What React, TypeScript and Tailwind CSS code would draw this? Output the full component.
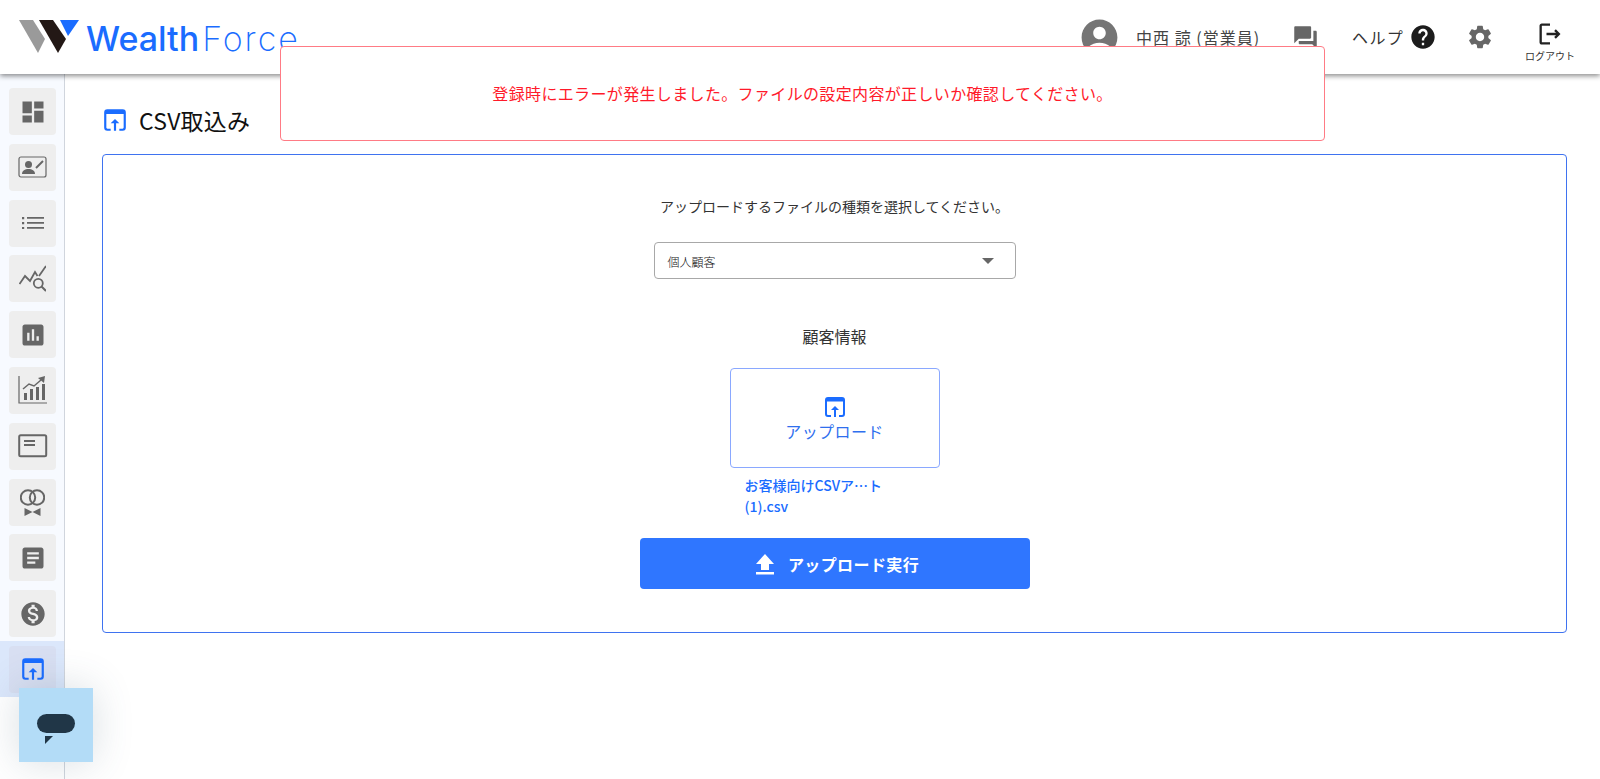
import {
  MdAccountCircle,
  MdArticle,
  MdAssessment,
  MdDashboard,
  MdForum,
  MdHelp,
  MdMonetizationOn,
  MdOutlineLogout,
  MdSettings,
} from "react-icons/md";

const UploadWindowIcon = ({ size = 24 }: { size?: number }) => (
  <svg width={size} height={size} viewBox="0 0 24 24" fill="none">
    <path d="M3 6.5V5a2 2 0 0 1 2-2h14a2 2 0 0 1 2 2v1.5z" fill="#1a6cff" />
    <path
      d="M8 21H5a2 2 0 0 1-2-2V5a2 2 0 0 1 2-2h14a2 2 0 0 1 2 2v14a2 2 0 0 1-2 2h-3"
      stroke="#1a6cff"
      strokeWidth="2"
    />
    <path d="M12 11l-4 4h3v7h2v-7h3z" fill="#1a6cff" />
  </svg>
);

const PersonCardIcon = () => (
  <svg width="30" height="24" viewBox="0 0 30 24" fill="none">
    <rect x="1" y="2" width="27" height="20" rx="2" stroke="#666" strokeWidth="1.2" />
    <circle cx="10.5" cy="9.5" r="3.5" fill="#666" />
    <path d="M4 19c0-3.5 3-5 6.500-5s6.500 1.500 6.500 5z" fill="#666" />
    <path d="M18 13l7-7" stroke="#666" strokeWidth="2" />
  </svg>
);

const ListIcon = () => (
  <svg width="22" height="12" viewBox="0 0 22 12" fill="#666">
    <path d="M0 0h2.200v2.200H0zM0 5h2.200v2.200H0zM0 10h2.200v2H0z" />
    <path d="M5 0h17v1.800H5zM5 5h17v1.800H5zM5 10h17v1.800H5z" />
  </svg>
);

const ChartSearchIcon = () => (
  <svg width="27" height="27" viewBox="0 0 27 27" fill="none" stroke="#666" strokeWidth="1.8">
    <path d="M0.500 19l5.500-8 5 5 5-9 2.500 4" />
    <path d="M20 11l7-10" />
    <circle cx="19.300" cy="18.300" r="4.500" />
    <path d="M22.500 21.500l4.500 4.500" strokeWidth="2" />
  </svg>
);

const GrowthChartIcon = () => (
  <svg width="30" height="30" viewBox="0 0 30 30" fill="none">
    <path d="M1 1v27h28" stroke="#666" strokeWidth="1.2" />
    <path d="M6 25v-7h3v7zM12 25V14h3v11zM18 25V12h3v13zM24 25V9h3v16z" fill="#666" />
    <path d="M5 14l6-5 5 2 7-6" stroke="#666" strokeWidth="1.500" />
    <path d="M20 3l7-2-1 7z" fill="#666" />
  </svg>
);

const CardIcon = () => (
  <svg width="30" height="24" viewBox="0 0 30 24" fill="none">
    <rect x="1.200" y="1.200" width="27" height="21" rx="1.500" stroke="#666" strokeWidth="2" />
    <path d="M6 7h11M6 11h11" stroke="#666" strokeWidth="2" />
  </svg>
);

const RingsIcon = () => (
  <svg width="25" height="27" viewBox="0 0 25 27" fill="none">
    <circle cx="8" cy="8.500" r="7.200" stroke="#666" strokeWidth="2" />
    <circle cx="17" cy="8.500" r="7.200" stroke="#666" strokeWidth="2" />
    <path d="M4.500 19l8 4-8 4zM20.500 19l-8 4 8 4z" fill="#666" />
  </svg>
);

const LogoMark = () => (
  <svg width="60" height="33" viewBox="0 0 60 33" className="shrink-0">
    <polygon points="0,0 14,0 26,19 19,33" fill="#9a9a9a" />
    <polygon points="20,0 34,0 47,19 39,33" fill="#231815" />
    <polygon points="41,0 60,0 49,16" fill="#1a6cff" />
  </svg>
);

const sideItems = [
  <MdDashboard size={28} color="#666" />,
  <PersonCardIcon />,
  <ListIcon />,
  <ChartSearchIcon />,
  <MdAssessment size={28} color="#666" />,
  <GrowthChartIcon />,
  <CardIcon />,
  <RingsIcon />,
  <MdArticle size={28} color="#666" />,
  <MdMonetizationOn size={28} color="#666" />,
];

export default function App() {
  return (
    <div
      className="relative flex h-[779px] w-[1600px] flex-col overflow-hidden bg-white text-[#222]"
      style={{ fontFamily: '"Noto Sans CJK JP", "Noto Sans", sans-serif' }}
    >
      <header className="relative z-10 flex h-[74px] shrink-0 items-center bg-white pl-[19px] shadow-[0_2px_5px_rgba(0,0,0,0.45)]">
        <div className="-mt-[1px] flex items-center">
          <LogoMark />
          <div
            className="ml-[7px] mt-[4px] whitespace-nowrap text-[34px] leading-none text-[#1a6cff]"
            style={{ fontFamily: "Inter, sans-serif" }}
          >
            <span className="font-medium">Wealth</span>
            <span className="ml-[3px] font-extralight tracking-[2px]">Force</span>
          </div>
        </div>

        <div className="ml-auto flex items-center">
          <MdAccountCircle size={43} color="#757575" />
          <span className="ml-[15px] text-base tracking-[1px] text-[#444]">中西 諒 (営業員)</span>
          <MdForum size={27} color="#666" className="ml-[32px]" />
          <span className="ml-[33px] text-base tracking-[1.3px] text-[#333]">ヘルプ</span>
          <MdHelp size={28} color="#1c1c1c" className="ml-[5px]" />
          <MdSettings size={28} color="#666" className="ml-[29px]" />
          <div className="ml-[33px] mr-[27px] flex w-[46px] flex-col items-center">
            <MdOutlineLogout size={28} color="#222" className="mt-[6px]" />
            <span className="mt-[3px] whitespace-nowrap text-[10px] leading-none text-[#333]">ログアウト</span>
          </div>
        </div>
      </header>

      <div className="flex min-h-0 flex-1">
        <aside className="flex w-[65px] shrink-0 flex-col border-r border-[#d0d5dd] bg-[linear-gradient(#f7faff,#f7faff_620px,#ffffff_620px)] pt-[14px]">
          {sideItems.map((icon, i) => (
            <div key={i} className="mb-[8.800px] ml-[9px] flex h-[47px] w-[47px] items-center justify-center rounded bg-[#eeeeee]">
              {icon}
            </div>
          ))}
          <div className="-mt-[4.800px] flex h-[56px] items-center bg-[#dbe7fb] pl-[9px]">
            <div className="flex h-[47px] w-[47px] items-center justify-center rounded bg-[#d8dff2]">
              <UploadWindowIcon size={26} />
            </div>
          </div>
        </aside>

        <main className="min-w-0 flex-1 pl-[37px] pr-[33px] pt-[33px]">
          <div className="flex h-[26px] items-center">
            <UploadWindowIcon size={26} />
            <h1 className="ml-[11px] text-[23px] font-normal leading-none tracking-[0.2px] text-[#111]">CSV取込み</h1>
          </div>

          <section className="mt-[21px] flex h-[479px] flex-col items-center rounded border border-[#3f73f0] pt-[41px]">
            <p className="text-sm leading-5 text-[#333]">アップロードするファイルの種類を選択してください。</p>

            <div className="mt-[26px] flex h-[37px] w-[362px] items-center justify-between rounded border border-[#a8a8a8] pl-[13px] pr-[21px]">
              <span className="mt-[2px] text-xs font-light text-[#111]">個人顧客</span>
              <span className="h-0 w-0 border-x-[6px] border-t-[6px] border-x-transparent border-t-[#666]" />
            </div>

            <p className="mt-[45px] text-base leading-6 text-[#333]">顧客情報</p>

            <div className="mt-[20px] flex h-[100px] w-[210px] flex-col items-center justify-center rounded border border-[#8aa8ff] pt-[2px]">
              <UploadWindowIcon size={24} />
              <span className="text-base leading-6 tracking-[0.4px] text-[#2f6fee]">アップロード</span>
            </div>

            <div className="mt-[7px] h-[42px] w-[210px] pl-[15px] text-sm font-medium leading-[21px] text-[#1a6cff]">
              <div>お客様向けCSVア⋯ト</div>
              <div>(1).csv</div>
            </div>

            <button className="mt-[21px] flex h-[51px] w-[390px] items-center justify-center rounded bg-[#2f76ff] pl-[5px] text-base font-bold tracking-[0.4px] text-white">
              <svg width="20" height="22" viewBox="0 0 20 22" fill="white">
                <path d="M10 1L1 11h5v6h8v-6h5zM1 19h18v2.500H1z" />
              </svg>
              <span className="ml-[13px]">アップロード実行</span>
            </button>
          </section>
        </main>
      </div>

      <div className="absolute left-[280px] top-[46px] z-20 flex h-[95px] w-[1045px] items-center justify-center rounded border border-[#ff7b85] bg-white pb-[1px] text-base tracking-[0.35px] text-[#ff1a2a]">
        登録時にエラーが発生しました。ファイルの設定内容が正しいか確認してください。
      </div>

      <div className="absolute left-[19px] top-[688px] z-20 h-[74px] w-[74px] bg-[#b3dcf7] shadow-[0_0_40px_rgba(60,90,110,0.2)]">
        <div className="absolute left-[18px] top-[26px] h-[19px] w-[38px] rounded-[10px] bg-[#203647]" />
        <svg width="8" height="8" viewBox="0 0 8 8" className="absolute left-[26px] top-[48px]">
          <polygon points="0,0 8,0 0,8" fill="#203647" />
        </svg>
      </div>
    </div>
  );
}
